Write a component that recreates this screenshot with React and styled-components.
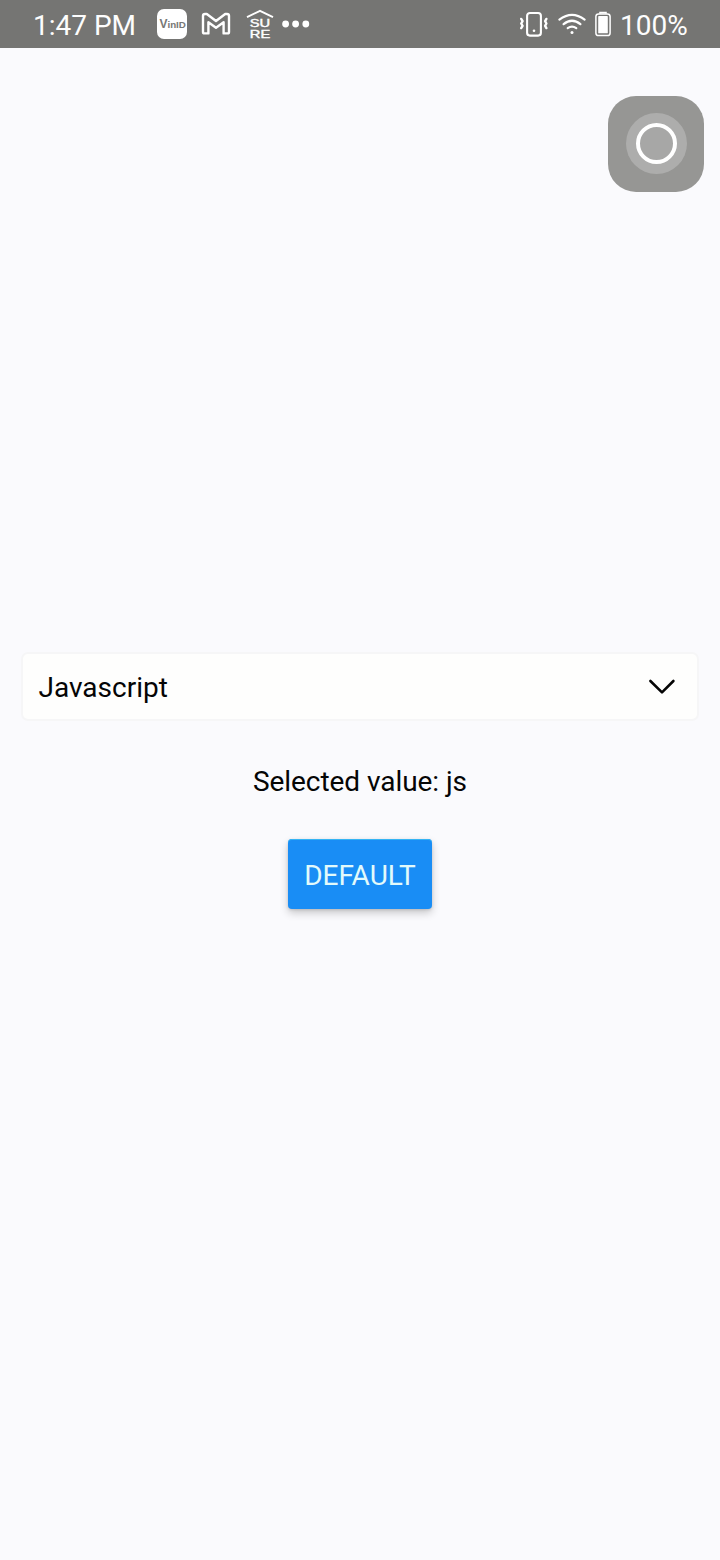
import React from "react";
import styled, { createGlobalStyle } from "styled-components";

const GlobalStyle = createGlobalStyle`
  * { box-sizing: border-box; }
  body {
    margin: 0;
    background: #fafafd;
    font-family: Roboto, "Liberation Sans", sans-serif;
  }
`;

const Screen = styled.div`
  position: relative;
  display: flex;
  flex-direction: column;
  width: 720px;
  height: 1560px;
  background: #fafafd;
  color: #050505;
  overflow: hidden;
`;

const StatusBar = styled.header`
  display: flex;
  justify-content: space-between;
  height: 48px;
  flex: none;
  padding: 0 32px 0 33px;
  background: #757573;
  color: #fdfdfd;
`;

const StatusGroup = styled.div`
  display: flex;
  align-items: center;
`;

const StatusText = styled.span`
  width: ${(p) => p.$width}px;
  margin-left: ${(p) => p.$gap || 0}px;
  padding-top: 4px;
  font-size: 28px;
  line-height: 34px;
  white-space: nowrap;
`;

const StatusIcon = styled.svg`
  display: block;
  flex: none;
  margin-left: ${(p) => p.$gap || 0}px;
`;

const AssistiveButton = styled.button`
  position: absolute;
  top: 96px;
  right: 16px;
  display: grid;
  place-items: center;
  width: 96px;
  height: 96px;
  padding: 0 0 1px 1px;
  border: 0;
  border-radius: 28px;
  background: #969694;
`;

const AssistiveHalo = styled.span`
  display: grid;
  place-items: center;
  width: 61px;
  height: 61px;
  border-radius: 50%;
  background: #adadac;
`;

const AssistiveRing = styled.span`
  width: 41px;
  height: 41px;
  border: 4px solid #fff;
  border-radius: 50%;
  background: #a7a7a6;
`;

const Content = styled.main`
  display: flex;
  flex: 1;
  flex-direction: column;
  align-items: center;
  padding: 604px 21px 0;
`;

const Select = styled.div`
  display: flex;
  align-items: center;
  justify-content: space-between;
  width: 100%;
  height: 69px;
  padding: 2px 21px 0 15.5px;
  border: 2px solid #f6f6f7;
  border-radius: 7px;
  background: #fefefd;
  font-size: 28px;
  line-height: 34px;
`;

const SelectedValue = styled.p`
  margin: 44px 0 0;
  font-size: 28px;
  line-height: 34px;
  letter-spacing: -0.06px;
  white-space: nowrap;
`;

const PrimaryButton = styled.button`
  display: flex;
  align-items: center;
  justify-content: center;
  width: 144px;
  height: 70px;
  margin-top: 40px;
  padding: 3px 0 0;
  border: 0;
  border-radius: 4px;
  background: #198df5;
  box-shadow: 0 4px 9px rgba(0, 0, 0, 0.2), 0 1px 3px rgba(0, 0, 0, 0.12), inset 0 1px 0 #35b4f4;
  color: #e2fafb;
  font-family: inherit;
  font-size: 28px;
  line-height: 34px;
`;

const VinIdIcon = () => (
  <StatusIcon $gap={22} width="30" height="30" viewBox="0 0 30 30">
    <rect width="30" height="30" rx="7" fill="#fff" />
    <text x="2.4" y="18.7" fontFamily="Liberation Sans, sans-serif" fontSize="9.8" fontWeight="700" fill="#777775">
      <tspan fontSize="12">V</tspan>inID
    </text>
  </StatusIcon>
);

const MailIcon = () => (
  <StatusIcon $gap={14} width="30" height="24" viewBox="0 0 30 24" fill="none" stroke="#fff" strokeWidth="2.4" strokeLinejoin="round">
    <path d="M2 3.8Q2 2 4 2H5.8L15 9L24.2 2H26Q28 2 28 3.8V20Q28 21.4 26.6 21.4H22.6V10.2L15 15.8L7.4 10.2V21.4H3.4Q2 21.4 2 20Z" />
  </StatusIcon>
);

const SureIcon = () => (
  <StatusIcon $gap={15} width="28" height="32" viewBox="0 0 28 32">
    <path d="M1 9.2L14 2.8L27 9.2" fill="none" stroke="#fff" strokeWidth="1.9" strokeLinejoin="round" />
    <g fontFamily="Liberation Sans, sans-serif" fontSize="11" fill="#fff" stroke="#fff" strokeWidth="0.4">
      <text x="3.8" y="19.3" textLength="20.4" lengthAdjust="spacingAndGlyphs">SU</text>
      <text x="3.8" y="29.8" textLength="20.4" lengthAdjust="spacingAndGlyphs">RE</text>
    </g>
  </StatusIcon>
);

const MoreIcon = () => (
  <StatusIcon $gap={7} width="30" height="8" viewBox="0 0 30 8" fill="#fff">
    <circle cx="4.6" cy="4" r="3.4" />
    <circle cx="14.6" cy="4" r="3.4" />
    <circle cx="24.8" cy="4" r="3.4" />
  </StatusIcon>
);

const VibrateIcon = () => (
  <StatusIcon width="30" height="28" viewBox="0 0 30 28" fill="none" stroke="#fff" strokeLinecap="round" strokeLinejoin="round">
    <rect x="8.1" y="3" width="13.8" height="22.6" rx="2.8" strokeWidth="2.1" />
    <path d="M2.2 8.9L3.6 11.2L2.2 13.5L3.6 15.8L2.2 18.1" strokeWidth="2.4" />
    <path d="M27.4 8.9L26.1 11.2L27.4 13.5L26.1 15.8L27.4 18.1" strokeWidth="2.4" />
    <circle cx="15" cy="20.8" r="1.3" fill="#fff" stroke="none" />
  </StatusIcon>
);

const WifiIcon = () => (
  <StatusIcon $gap={8} width="30" height="26" viewBox="0 0 30 26" fill="none" stroke="#fff" strokeWidth="2.2" strokeLinecap="round">
    <path d="M2.4 8.6Q15 -1 27.6 8.6" />
    <path d="M6.6 13.2Q15 6.3 23.4 13.2" />
    <path d="M10.7 17.2Q15 14 19.3 17.2" />
    <circle cx="15" cy="21.4" r="1.5" fill="#fff" stroke="none" />
  </StatusIcon>
);

const BatteryIcon = () => (
  <StatusIcon $gap={8} width="16" height="26" viewBox="0 0 16 26">
    <path d="M5 2.8V1.6H11V2.8" fill="none" stroke="#fff" strokeWidth="1.6" />
    <rect x="0.9" y="2.9" width="14.2" height="21.6" rx="2.6" fill="none" stroke="#fff" strokeWidth="1.5" />
    <rect x="3.2" y="5.1" width="9.6" height="17.2" rx="0.6" fill="#fff" />
  </StatusIcon>
);

const ChevronDown = () => (
  <svg width="28" height="18" viewBox="0 0 28 18" fill="none" stroke="#050505" strokeWidth="2.6" strokeLinecap="round" strokeLinejoin="round">
    <path d="M2.4 2L14 13.4L25.4 2" />
  </svg>
);

export default function App() {
  return (
    <>
      <GlobalStyle />
      <Screen>
        <StatusBar>
          <StatusGroup>
            <StatusText $width={102}>1:47 PM</StatusText>
            <VinIdIcon />
            <MailIcon />
            <SureIcon />
            <MoreIcon />
          </StatusGroup>
          <StatusGroup>
            <VibrateIcon />
            <WifiIcon />
            <BatteryIcon />
            <StatusText $gap={9} $width={68}>100%</StatusText>
          </StatusGroup>
        </StatusBar>
        <Content>
          <Select role="combobox" aria-expanded="false">
            <span>Javascript</span>
            <ChevronDown />
          </Select>
          <SelectedValue>Selected value: js</SelectedValue>
          <PrimaryButton>DEFAULT</PrimaryButton>
        </Content>
        <AssistiveButton aria-label="Assistive touch">
          <AssistiveHalo>
            <AssistiveRing />
          </AssistiveHalo>
        </AssistiveButton>
      </Screen>
    </>
  );
}
